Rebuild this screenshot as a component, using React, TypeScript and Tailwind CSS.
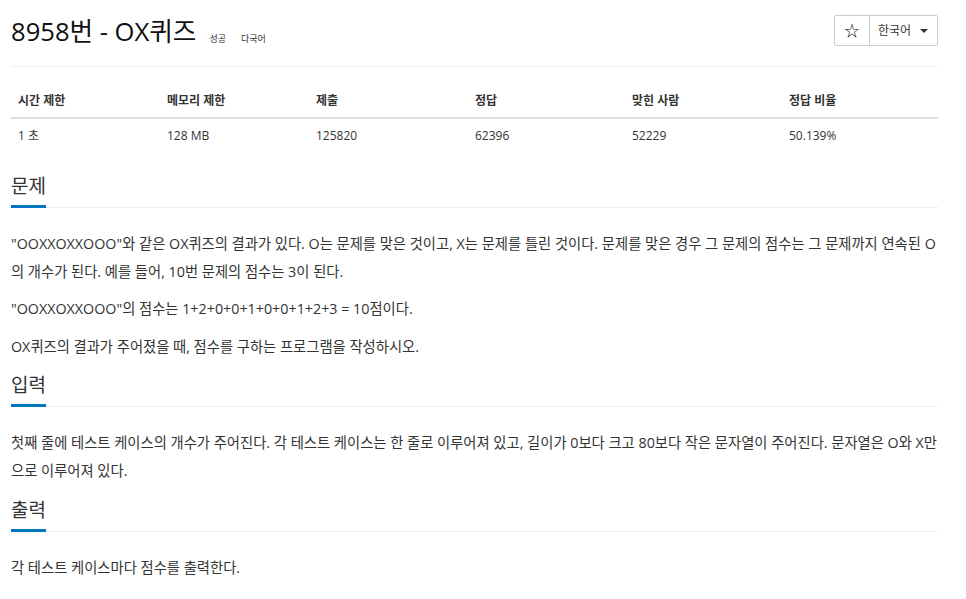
import React from "react";

const F = { fontFamily: '"Open Sans", "Noto Sans CJK KR", sans-serif' };

function Section({ title, children }: { title: string; children: React.ReactNode }) {
  return (
    <section>
      <div className="border-b border-[#eee]">
        <h2 className="inline-block text-[19px] leading-[24px] text-[#333] pb-[7px] border-b-[3px] border-[#0076c0] -mb-px">
          {title}
        </h2>
      </div>
      <div className="mt-[22px] text-[14.3px] leading-[28px] text-[#333]">{children}</div>
    </section>
  );
}

export default function App() {
  const cols = ["w-[149px]", "w-[149px]", "w-[159px]", "w-[157px]", "w-[157px]", "w-[156px]"];
  const heads = ["시간 제한", "메모리 제한", "제출", "정답", "맞힌 사람", "정답 비율"];
  const vals = ["1 초", "128 MB", "125820", "62396", "52229", "50.139%"];
  return (
    <div className="bg-white min-h-[599px] px-[11px] w-[966px]" style={F}>
      <div className="w-[927px]">
        <div className="flex items-start justify-between pt-[14px] pb-[16px] border-b border-[#eee]">
          <div className="flex items-end h-[36px]">
            <h1 className="text-[25.6px] leading-[36px] text-[#111] font-normal">8958번 - OX퀴즈</h1>
            <span className="ml-[13px] mb-[5px] text-[9px] leading-[12px] text-[#333]">성공</span>
            <span className="ml-[15px] mb-[5px] text-[9px] leading-[12px] text-[#333]">다국어</span>
          </div>
          <div className="flex mt-[1px] h-[31px] border border-[#ccc] rounded-[2px]">
            <div className="w-[35px] flex items-center justify-center border-r border-[#ccc] text-[15px] text-[#111]">☆</div>
            <div className="w-[67px] flex items-center pl-[8px] text-[12px] text-[#333]">
              한국어
              <span className="ml-[9px] w-0 h-0 border-l-[4px] border-r-[4px] border-t-[4px] border-l-transparent border-r-transparent border-t-[#333]" />
            </div>
          </div>
        </div>

        <div className="mt-[18px]">
          <div className="flex h-[34px] items-center border-b-2 border-[#ddd] text-[12px] font-bold text-[#333]">
            {heads.map((h, i) => (
              <div key={i} className={`${cols[i]} pl-[7px]`}>{h}</div>
            ))}
          </div>
          <div className="flex h-[33px] items-center text-[12px] text-[#333]">
            {vals.map((v, i) => (
              <div key={i} className={`${cols[i]} pl-[7px]`}>{v}</div>
            ))}
          </div>
        </div>

        <div className="mt-[22px]">
          <Section title="문제">
            <p className="mb-[9px]">
              "OOXXOXXOOO"와 같은 OX퀴즈의 결과가 있다. O는 문제를 맞은 것이고, X는 문제를 틀린 것이다. 문제를 맞은 경우 그 문제의 점수는 그 문제까지 연속된 O의 개수가 된다. 예를 들어, 10번 문제의 점수는 3이 된다.
            </p>
            <p className="mb-[10px]">"OOXXOXXOOO"의 점수는 1+2+0+0+1+0+0+1+2+3 = 10점이다.</p>
            <p>OX퀴즈의 결과가 주어졌을 때, 점수를 구하는 프로그램을 작성하시오.</p>
          </Section>
        </div>
        <div className="mt-[12px]">
          <Section title="입력">
            <p>
              첫째 줄에 테스트 케이스의 개수가 주어진다. 각 테스트 케이스는 한 줄로 이루어져 있고, 길이가 0보다 크고 80보다 작은 문자열이 주어진다. 문자열은 O와 X만으로 이루어져 있다.
            </p>
          </Section>
        </div>
        <div className="mt-[13px]">
          <Section title="출력">
            <p>각 테스트 케이스마다 점수를 출력한다.</p>
          </Section>
        </div>
      </div>
    </div>
  );
}
